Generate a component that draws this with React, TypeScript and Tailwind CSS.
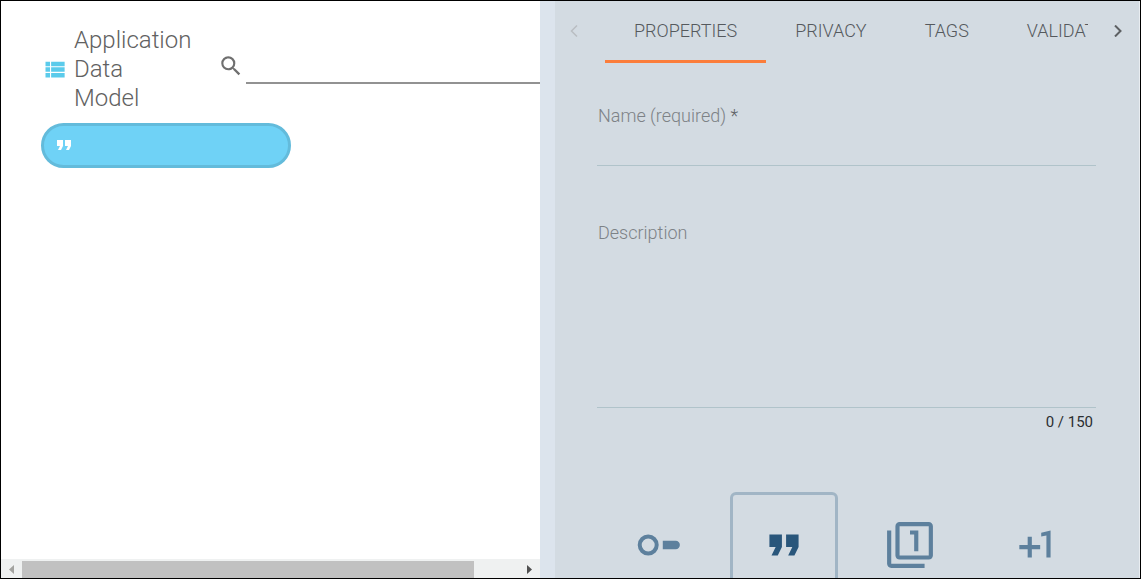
import { useState } from "react";

type IconProps = { path: string; className: string };

const icons = {
  list: "M4 14h4v-4H4v4zm0 5h4v-4H4v4zM4 9h4V5H4v4zm5 5h12v-4H9v4zm0 5h12v-4H9v4zM9 5v4h12V5H9z",
  search:
    "M15.5 14h-.79l-.28-.27A6.471 6.471 0 0 0 16 9.5 6.5 6.5 0 1 0 9.5 16c1.61 0 3.09-.59 4.23-1.57l.27.28v.79l5 4.99L20.49 19l-4.99-5zm-6 0C7.01 14 5 11.99 5 9.5S7.01 5 9.5 5 14 7.01 14 9.5 11.99 14 9.5 14z",
  quote: "M6 17h3l2-4V7H5v6h3zm8 0h3l2-4V7h-6v6h3z",
  filterOne:
    "M3 5H1v16c0 1.1.9 2 2 2h16v-2H3V5zm11 10h2V5h-4v2h2v8zm7-14H7c-1.1 0-2 .9-2 2v14c0 1.1.9 2 2 2h14c1.1 0 2-.9 2-2V3c0-1.1-.9-2-2-2zm0 16H7V3h14v14z",
  plusOne: "M10 8H8v4H4v2h4v4h2v-4h4v-2h-4V8zm4.5-1.92V7.9l2.5-.5V18h2V5l-4.5 1.08z",
  toggle:
    "M7.3 6.96a5.04 5.04 0 1 0 0 10.08a5.04 5.04 0 1 0 0-10.08zm0 1.92a3.12 3.12 0 1 1 0 6.24a3.12 3.12 0 1 1 0-6.24zM14.3 10h6.2a2 2 0 0 1 0 4H14.3z",
};

function Icon({ path, className }: IconProps) {
  return (
    <svg viewBox="0 0 24 24" fill="currentColor" aria-hidden="true" className={className}>
      <path d={path} />
    </svg>
  );
}

const tabs = ["PROPERTIES", "PRIVACY", "TAGS", "VALIDATION"];

const types = [
  { name: "Boolean", path: icons.toggle },
  { name: "Text", path: icons.quote },
  { name: "Integer", path: icons.filterOne },
  { name: "Number", path: icons.plusOne },
];

function ModelPanel() {
  return (
    <section className="flex min-w-0 flex-col overflow-hidden bg-white">
      <div className="min-h-0 flex-1 overflow-hidden pt-[25px] pl-10">
        <header className="flex items-center">
          <Icon path={icons.list} className="size-[27px] shrink-0 text-[#5bcbeb]" />
          <h1 className="mr-6 ml-[6px] w-[118px] shrink-0 text-[24px] leading-[29px] font-light text-[#616161]">
            Application Data Model
          </h1>
          <label htmlFor="search" className="ml-[2px] shrink-0 pb-2" aria-label="Search">
            <Icon path={icons.search} className="size-[26px] text-[#6f6f6f]" />
          </label>
          <input
            id="search"
            type="text"
            className="ml-[2px] h-7 min-w-0 flex-1 border-b-2 border-[#929292] bg-transparent text-lg outline-none"
          />
        </header>
        <button
          type="button"
          aria-label="Unnamed text field"
          className="mt-[10px] flex h-[45px] w-[250px] items-center rounded-full border-3 border-[#63bbdb] bg-[#6fd2f6] pb-[2px] pl-2 text-white"
        >
          <Icon path={icons.quote} className="size-6" />
        </button>
      </div>
      <div className="flex h-[19px] shrink-0 items-stretch bg-[#eff1f1] pt-[2px]">
        <button type="button" aria-label="Scroll left" className="flex w-[21px] items-center justify-center">
          <svg viewBox="0 0 5 9" className="h-[9px] w-[5px]" fill="#a3a3a0">
            <path d="M5 0v9L0 4.5z" />
          </svg>
        </button>
        <div className="flex flex-1">
          <div className="w-[91%] bg-[#c1c1c1]" />
        </div>
        <button type="button" aria-label="Scroll right" className="flex w-[21px] items-center justify-center">
          <svg viewBox="0 0 5 9" className="h-[9px] w-[5px]" fill="#505050">
            <path d="M0 0v9L5 4.5z" />
          </svg>
        </button>
      </div>
    </section>
  );
}

function TabBar() {
  const [active, setActive] = useState("PROPERTIES");
  return (
    <nav className="flex h-[62px] shrink-0">
      <button
        type="button"
        disabled
        aria-label="Previous tabs"
        className="flex w-[50px] shrink-0 items-center pb-[2px] pl-[15px]"
      >
        <svg viewBox="0 0 8 12" className="h-3 w-2" fill="none" stroke="#b9bec2" strokeWidth="1.5">
          <path d="M7 0.5L1.5 6L7 11.5" />
        </svg>
      </button>
      <div role="tablist" className="flex min-w-0 flex-1 overflow-hidden">
        {tabs.map((tab) => (
          <button
            key={tab}
            type="button"
            role="tab"
            aria-selected={tab === active}
            onClick={() => setActive(tab)}
            className={
              tab === active
                ? "shrink-0 border-b-3 border-[#fb7d3b] px-[29px] text-lg font-light text-[#55595d]"
                : "shrink-0 border-b-3 border-transparent px-[29px] text-lg font-light text-[#55595d]"
            }
          >
            {tab}
          </button>
        ))}
      </div>
      <button
        type="button"
        aria-label="Next tabs"
        className="flex w-[51px] shrink-0 items-center justify-end pr-[17px] pb-[2px]"
      >
        <svg viewBox="0 0 8 12" className="h-3 w-2" fill="none" stroke="#5d6063" strokeWidth="2">
          <path d="M1 0.5L6.5 6L1 11.5" />
        </svg>
      </button>
    </nav>
  );
}

function PropertiesPanel() {
  const [description, setDescription] = useState("");
  const [type, setType] = useState("Text");
  return (
    <section className="flex min-w-0 flex-col overflow-hidden border-r border-[#e9edf1] bg-[#d3dbe2]">
      <TabBar />
      <form className="flex flex-col pt-[41px] pr-[43px] pl-[42px]">
        <label htmlFor="name" className="px-px text-lg leading-6 font-light text-[#7d8286]">
          Name (required) <span className="text-[#5f6366]">*</span>
        </label>
        <input
          id="name"
          type="text"
          required
          className="h-[38px] border-b border-[#b0c3ca] bg-transparent px-px text-lg outline-none"
        />
        <label
          htmlFor="description"
          className="mt-[55px] px-px text-lg leading-6 font-light text-[#7d8286]"
        >
          Description
        </label>
        <textarea
          id="description"
          maxLength={150}
          value={description}
          onChange={(event) => setDescription(event.target.value)}
          className="h-[163px] resize-none border-b border-[#b0c3ca] bg-transparent px-px text-lg outline-none"
        />
        <p className="mt-1 pr-[3px] text-right text-[15px] leading-5 text-[#2b2e31]">
          {description.length} / 150
        </p>
        <div className="mt-[60px] flex justify-center gap-[18px]">
          {types.map(({ name, path }) => (
            <button
              key={name}
              type="button"
              aria-label={name}
              aria-pressed={name === type}
              onClick={() => setType(name)}
              className={
                name === type
                  ? "flex size-[108px] shrink-0 items-center justify-center rounded-md border-3 border-[#a1b5c5] pb-[2px] text-[#29567b]"
                  : "flex size-[108px] shrink-0 items-center justify-center rounded-md border-3 border-transparent pb-[2px] text-[#5d809d]"
              }
            >
              <Icon path={path} className="size-[50px]" />
            </button>
          ))}
        </div>
      </form>
    </section>
  );
}

export default function App() {
  return (
    <main className="grid h-screen grid-cols-[539fr_15px_585fr] grid-rows-[minmax(0,1fr)] overflow-hidden border border-black font-[Roboto,sans-serif]">
      <ModelPanel />
      <div role="separator" aria-orientation="vertical" className="bg-[#dce4ed]" />
      <PropertiesPanel />
    </main>
  );
}
